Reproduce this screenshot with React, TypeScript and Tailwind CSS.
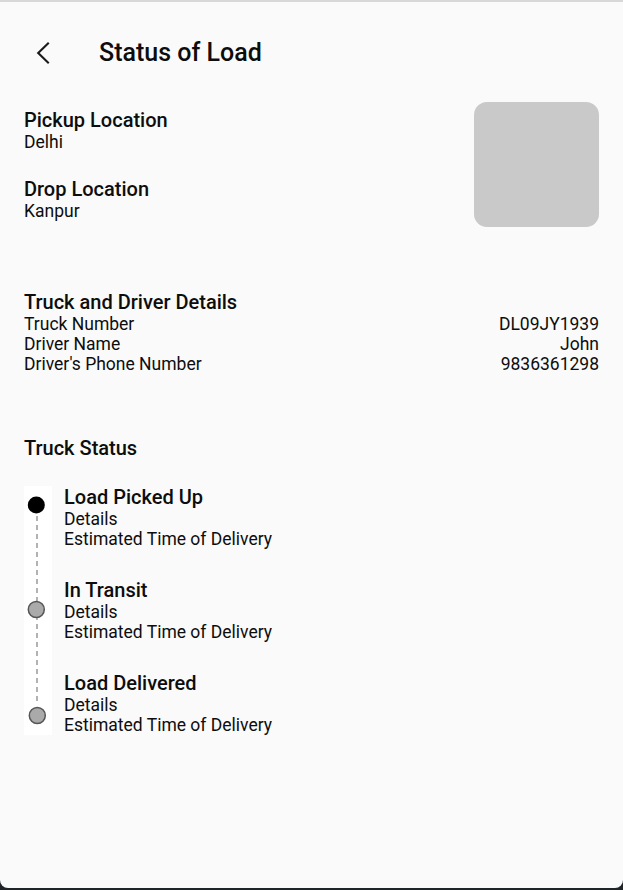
const details = [
  { label: 'Truck Number', value: 'DL09JY1939' },
  { label: 'Driver Name', value: 'John' },
  { label: "Driver's Phone Number", value: '9836361298' },
];

const steps = ['Load Picked Up', 'In Transit', 'Load Delivered'];

function Timeline() {
  return (
    <svg width="28" height="249" viewBox="0 0 28 249" className="shrink-0 bg-white">
      <line x1="13" y1="30" x2="13" y2="219" stroke="#8a8a8a" strokeWidth="1.3" strokeDasharray="5 4" />
      <circle cx="12.3" cy="19" r="8.5" fill="#000" />
      <circle cx="12.3" cy="123.5" r="8" fill="#aaaaaa" stroke="#555" strokeWidth="1.5" />
      <circle cx="13.3" cy="229.5" r="8" fill="#aaaaaa" stroke="#555" strokeWidth="1.5" />
    </svg>
  );
}

export default function App() {
  return (
    <div className="bg-[#1f2429] min-h-[890px] font-['Roboto',sans-serif]">
      <div className="h-[888px] bg-[#fafafa] border-t-2 border-[#d8d8d8] rounded-b-[8px] text-[#0d0d0d]">
        {/* Header */}
        <div className="flex items-center h-[100px] pt-[2px]">
          <button className="w-[99px] pl-[36px] flex items-center">
            <svg width="14" height="22" viewBox="0 0 14 22" fill="none">
              <polyline points="12,1.5 2.2,11 12,20.5" stroke="#1a1a1a" strokeWidth="2.1" strokeLinecap="square" />
            </svg>
          </button>
          <h1 className="text-[25px] font-medium">Status of Load</h1>
        </div>

        <div className="px-6">
          {/* Locations */}
          <div className="flex items-center justify-between">
            <div className="flex flex-col">
              <p className="text-[20px] font-medium leading-[23px]">Pickup Location</p>
              <p className="text-[17.5px] leading-[20px]">Delhi</p>
              <p className="mt-[26px] text-[20px] font-medium leading-[23px]">Drop Location</p>
              <p className="text-[17.5px] leading-[20px]">Kanpur</p>
            </div>
            <div className="w-[125px] h-[125px] rounded-[13px] bg-[#c9c9c9]" />
          </div>

          {/* Truck and driver */}
          <div className="mt-[63px]">
            <p className="text-[20px] font-medium leading-[24px]">Truck and Driver Details</p>
            {details.map((d) => (
              <div key={d.label} className="flex justify-between text-[17.5px] leading-[20px]">
                <span>{d.label}</span>
                <span>{d.value}</span>
              </div>
            ))}
          </div>

          {/* Truck status */}
          <p className="mt-[63px] text-[20px] font-medium leading-[23px]">Truck Status</p>
          <div className="mt-[26px] flex">
            <Timeline />
            <div className="ml-3 flex flex-col gap-[30px]">
              {steps.map((s) => (
                <div key={s}>
                  <p className="text-[20px] font-medium leading-[23px]">{s}</p>
                  <p className="text-[17.5px] leading-[20px]">Details</p>
                  <p className="text-[17.5px] leading-[20px]">Estimated Time of Delivery</p>
                </div>
              ))}
            </div>
          </div>
        </div>
      </div>
    </div>
  );
}
